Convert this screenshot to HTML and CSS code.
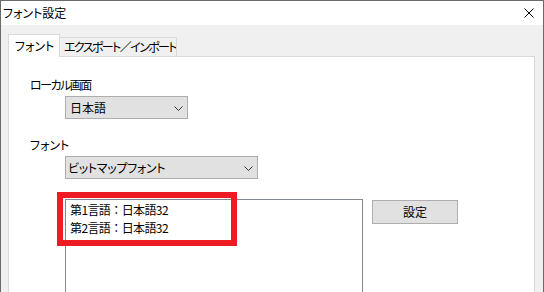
FILE: index.html
```html
<!DOCTYPE html>
<html lang="ja">
<head>
    <meta charset="UTF-8">
    <title>フォント設定</title>
    <link rel="stylesheet" href="styles.css">
</head>
<body>
    <div class="window">
        <div class="titlebar">
            <span class="title">フォント設定</span>
            <svg class="close" width="10" height="10" viewBox="0 0 10 10">
                <path d="M0.5 0.5 L9.5 9.5 M9.5 0.5 L0.5 9.5" stroke="#000" stroke-width="1" fill="none"/>
            </svg>
        </div>
        <div class="client">
            <div class="tabs">
                <div class="tab active">フォント</div>
                <div class="tab tab-io">エクスポート／インポート</div>
            </div>
            <div class="panel">
                <div class="label label-local">ローカル画面</div>
                <div class="combo combo-lang">
                    <span>日本語</span>
                    <svg class="chevron" width="9" height="5" viewBox="0 0 9 5">
                        <path d="M0.5 0.5 L4.5 4.5 L8.5 0.5" stroke="#333" stroke-width="1" fill="none"/>
                    </svg>
                </div>
                <div class="label label-font">フォント</div>
                <div class="combo combo-font">
                    <span>ビットマップフォント</span>
                    <svg class="chevron" width="9" height="5" viewBox="0 0 9 5">
                        <path d="M0.5 0.5 L4.5 4.5 L8.5 0.5" stroke="#333" stroke-width="1" fill="none"/>
                    </svg>
                </div>
                <div class="list-row">
                    <div class="listbox">
                        <div class="item">第1言語：日本語32</div>
                        <div class="item">第2言語：日本語32</div>
                    </div>
                    <button class="btn">設定</button>
                    <div class="mark"></div>
                </div>
            </div>
        </div>
    </div>
</body>
</html>
```

FILE: styles.css
```css
html, body {
    margin: 0;
    padding: 0;
}
body {
    width: 544px;
    height: 292px;
    overflow: hidden;
    background: #f0f0f0;
    font-family: "Noto Sans CJK JP", "Noto Sans", sans-serif;
    font-size: 12px;
    line-height: 16px;
    color: #000;
    font-feature-settings: "palt";
}
.window {
    width: 544px;
    height: 292px;
    box-sizing: border-box;
    border: 1px solid #6a6a6a;
    border-bottom: none;
    background: #f0f0f0;
    overflow: hidden;
}
.titlebar {
    height: 24px;
    background: #fff;
    display: flex;
    align-items: center;
    justify-content: space-between;
}
.title {
    padding-left: 2px;
}
.close {
    margin-right: 9px;
}
.client {
    padding: 9px 8px 0 7px;
}
.tabs {
    display: flex;
    align-items: flex-end;
    height: 22px;
}
.tab {
    box-sizing: border-box;
    height: 19px;
    line-height: 17px;
    padding: 0 4px;
    border: 1px solid #d9d9d9;
    border-bottom: none;
    background: #f0f0f0;
    margin-left: -1px;
    white-space: nowrap;
}
.tab-io {
    width: 118px;
    letter-spacing: -1.6px;
    overflow: hidden;
}
.tab.active {
    position: relative;
    z-index: 1;
    height: 23px;
    margin-left: 0;
    margin-bottom: -1px;
    width: 52px;
    padding: 2px 0 0 6px;
    background: #fff;
}
.panel {
    height: 240px;
    border: 1px solid #d9d9d9;
    background: #fff;
    padding: 20px 0 0 21px;
}
.label-local {
    letter-spacing: -1.5px;
}
.label-font {
    margin-top: 18px;
}
.combo {
    box-sizing: border-box;
    height: 23px;
    margin: 3px 0 0 35px;
    border: 1px solid #adadad;
    background: #e1e1e1;
    display: flex;
    align-items: center;
    justify-content: space-between;
    padding: 0 4px 0 4px;
}
.combo-lang {
    width: 123px;
}
.combo-font {
    width: 193px;
    padding-left: 2px;
    letter-spacing: -0.3px;
}
.chevron {
    margin-top: 1px;
}
.list-row {
    position: relative;
    display: flex;
    align-items: flex-start;
    margin-top: 20px;
}
.listbox {
    box-sizing: border-box;
    width: 298px;
    height: 120px;
    margin-left: 35px;
    border: 1px solid #828790;
    padding: 1px 0 0 4px;
    background: #fff;
}
.item {
    line-height: 18px;
    font-feature-settings: normal;
    letter-spacing: -0.6px;
}
.btn {
    box-sizing: border-box;
    width: 86px;
    height: 24px;
    margin: 1px 0 0 9px;
    padding: 0;
    border: 1px solid #adadad;
    background: #e1e1e1;
    font: inherit;
    color: #000;
}
.mark {
    position: absolute;
    left: 27px;
    top: -7px;
    width: 180px;
    height: 54px;
    box-sizing: border-box;
    border: 6px solid #ed1c24;
}
```
